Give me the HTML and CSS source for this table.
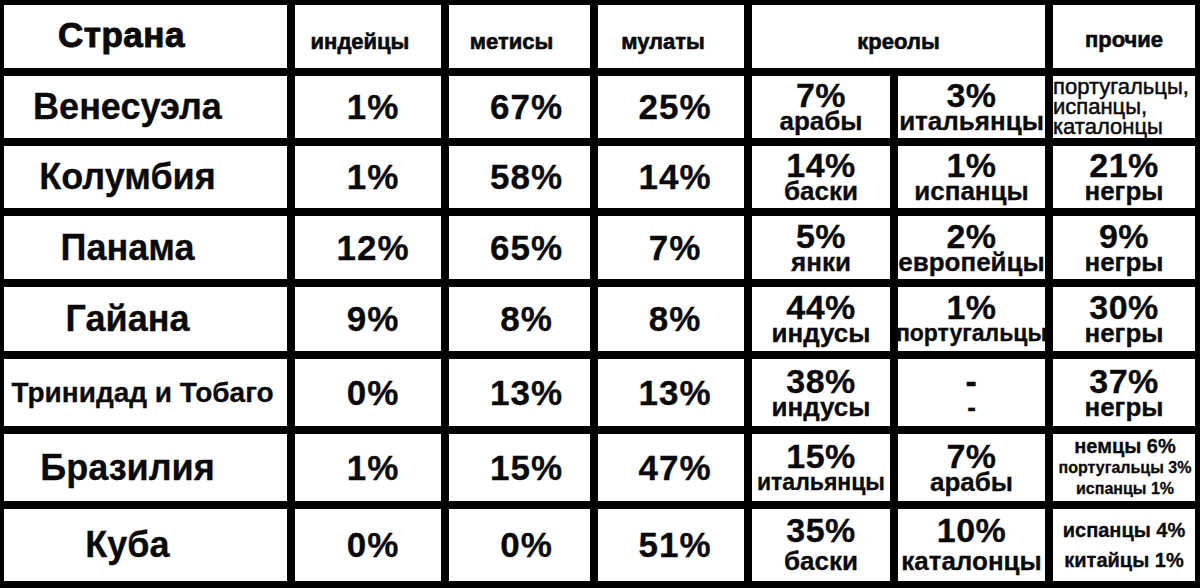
FILE: index.html
```html
<!DOCTYPE html>
<html lang="ru">
<head>
<meta charset="utf-8">
<title>Население стран</title>
<link rel="stylesheet" href="styles.css">
</head>
<body>
<div class="table">
  <div class="cell h-country">Страна</div>
  <div class="cell h-label shift">индейцы</div>
  <div class="cell h-label shift">метисы</div>
  <div class="cell h-label shift">мулаты</div>
  <div class="cell h-label span2">креолы</div>
  <div class="cell h-label h-other">прочие</div>

  <div class="cell country">Венесуэла</div>
  <div class="cell pct c1">1%</div>
  <div class="cell pct c2">67%</div>
  <div class="cell pct c3">25%</div>
  <div class="cell pair"><span class="num">7%</span><span class="lbl">арабы</span></div>
  <div class="cell pair"><span class="num">3%</span><span class="lbl">итальянцы</span></div>
  <div class="cell list"><span>португальцы,</span><span>испанцы,</span><span>каталонцы</span></div>

  <div class="cell country">Колумбия</div>
  <div class="cell pct c1">1%</div>
  <div class="cell pct c2">58%</div>
  <div class="cell pct c3">14%</div>
  <div class="cell pair"><span class="num">14%</span><span class="lbl">баски</span></div>
  <div class="cell pair"><span class="num">1%</span><span class="lbl">испанцы</span></div>
  <div class="cell pair"><span class="num">21%</span><span class="lbl">негры</span></div>

  <div class="cell country">Панама</div>
  <div class="cell pct c1">12%</div>
  <div class="cell pct c2">65%</div>
  <div class="cell pct c3">7%</div>
  <div class="cell pair"><span class="num">5%</span><span class="lbl">янки</span></div>
  <div class="cell pair"><span class="num">2%</span><span class="lbl">европейцы</span></div>
  <div class="cell pair"><span class="num">9%</span><span class="lbl">негры</span></div>

  <div class="cell country">Гайана</div>
  <div class="cell pct c1">9%</div>
  <div class="cell pct c2">8%</div>
  <div class="cell pct c3">8%</div>
  <div class="cell pair"><span class="num">44%</span><span class="lbl">индусы</span></div>
  <div class="cell pair"><span class="num">1%</span><span class="lbl lbl-narrow">португальцы</span></div>
  <div class="cell pair"><span class="num">30%</span><span class="lbl">негры</span></div>

  <div class="cell country country-long">Тринидад и Тобаго</div>
  <div class="cell pct c1">0%</div>
  <div class="cell pct c2">13%</div>
  <div class="cell pct c3">13%</div>
  <div class="cell pair"><span class="num">38%</span><span class="lbl">индусы</span></div>
  <div class="cell pair"><span class="num">-</span><span class="lbl">-</span></div>
  <div class="cell pair"><span class="num">37%</span><span class="lbl">негры</span></div>

  <div class="cell country">Бразилия</div>
  <div class="cell pct c1">1%</div>
  <div class="cell pct c2">15%</div>
  <div class="cell pct c3">47%</div>
  <div class="cell pair"><span class="num">15%</span><span class="lbl lbl-narrow">итальянцы</span></div>
  <div class="cell pair"><span class="num">7%</span><span class="lbl">арабы</span></div>
  <div class="cell list-small"><span class="big">немцы 6%</span><span>португальцы 3%</span><span>испанцы 1%</span></div>

  <div class="cell country">Куба</div>
  <div class="cell pct c1">0%</div>
  <div class="cell pct c2">0%</div>
  <div class="cell pct c3">51%</div>
  <div class="cell pair pair-tall"><span class="num">35%</span><span class="lbl">баски</span></div>
  <div class="cell pair pair-tall"><span class="num">10%</span><span class="lbl">каталонцы</span></div>
  <div class="cell list-wide"><span>испанцы 4%</span><span>китайцы 1%</span></div>
</div>
</body>
</html>
```

FILE: styles.css
```css
html, body {
  margin: 0;
  padding: 0;
  background: #000;
}

.table {
  box-sizing: border-box;
  width: 1200px;
  height: 588px;
  padding: 5px 5px 7px 4px;
  display: grid;
  gap: 8px;
  grid-template-columns: 283px 146px 141px 146px 138px 147px 142px;
  grid-template-rows: 63px 62px 62px 63px 64px 67px 67px 72px;
  background: #000;
  font-family: "Liberation Sans", Arial, sans-serif;
  font-weight: 700;
  color: #0a0a0a;
  -webkit-text-stroke: 0.3px #0a0a0a;
}

.cell {
  box-sizing: border-box;
  background: #fff;
  display: flex;
  flex-direction: column;
  align-items: center;
  justify-content: center;
  white-space: nowrap;
  min-width: 0;
}

/* header */
.h-country {
  font-size: 35px;
  -webkit-text-stroke: 1px #0a0a0a;
  letter-spacing: 0.5px;
  padding-right: 48px;
  padding-bottom: 3px;
}

.h-label {
  font-size: 22px;
  -webkit-text-stroke: 0.6px #0a0a0a;
  padding-top: 11px;
}

.h-label.shift {
  padding-right: 16px;
}

.span2 {
  grid-column: span 2;
}

.h-other {
  padding-top: 7px;
}

/* body */
.country {
  font-size: 36px;
  padding-right: 36px;
}

.country-long {
  font-size: 28px;
  padding-right: 6px;
}

.pct {
  font-size: 35px;
  letter-spacing: 1px;
}

.c1 {
  padding-left: 10px;
}

.c2 {
  padding-left: 14px;
}

.c3 {
  padding-left: 8px;
}

.pair .num {
  font-size: 34px;
  line-height: 28px;
  letter-spacing: 0.5px;
}

.pair .lbl {
  font-size: 26px;
  line-height: 24px;
}

.pair .lbl-narrow {
  font-size: 23px;
}

.pair-tall .num {
  line-height: 32px;
}

.pair-tall .lbl {
  line-height: 30px;
}

.list {
  align-items: flex-start;
  font-weight: 400;
  font-size: 22px;
  line-height: 20px;
  -webkit-text-stroke: 0.5px #0a0a0a;
  padding-left: 0;
}

.list-small {
  font-size: 16px;
  line-height: 21px;
  padding-left: 2px;
}

.list-small .big {
  font-size: 20px;
}

.list-wide {
  font-size: 20px;
  line-height: 30px;
}
```
